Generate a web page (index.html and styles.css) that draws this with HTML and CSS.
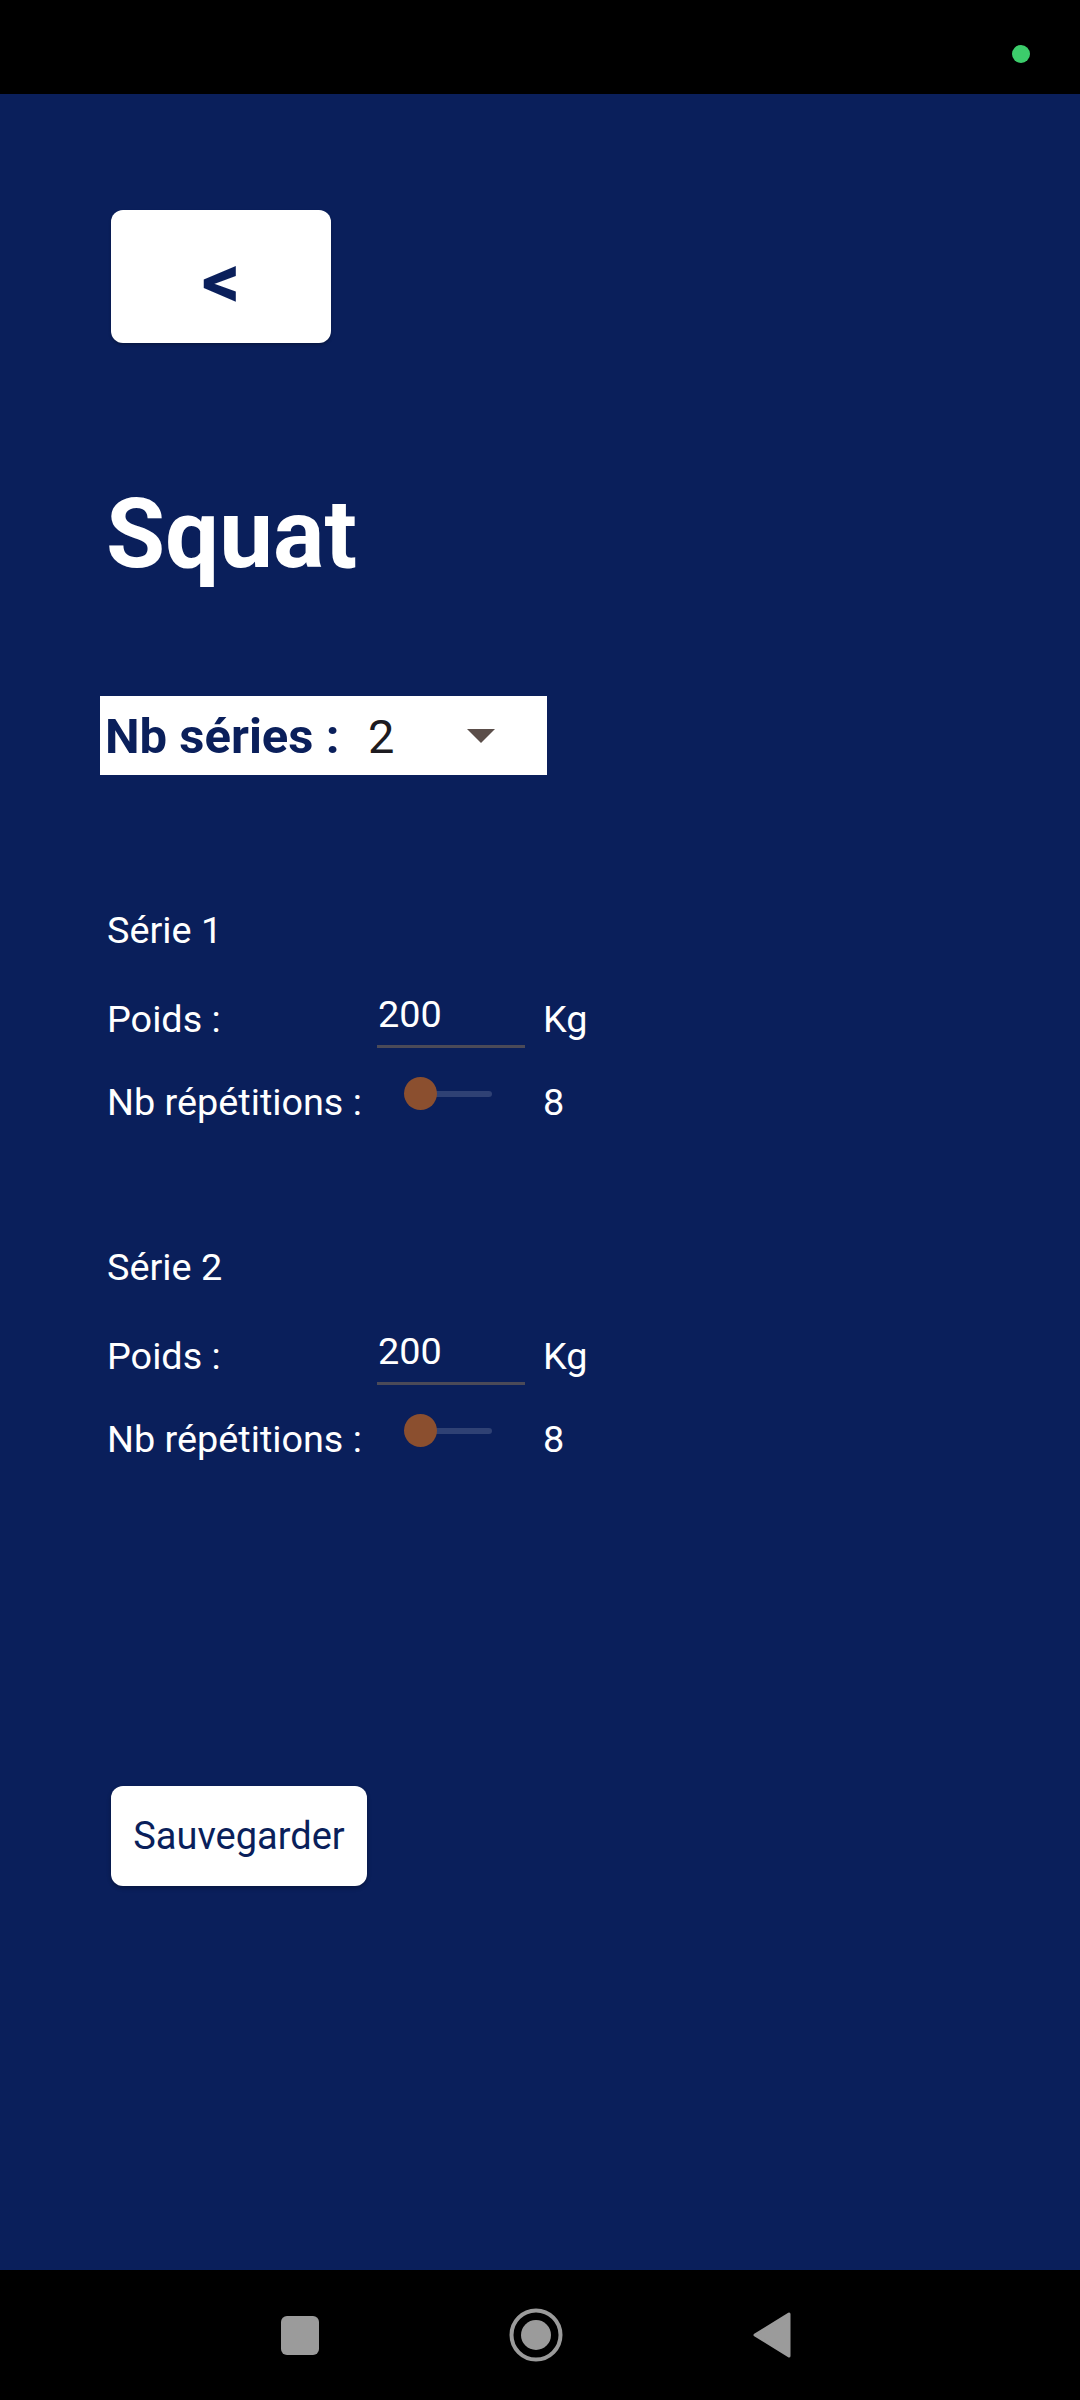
FILE: index.html
```html
<!DOCTYPE html>
<html lang="fr">
<head>
    <meta charset="UTF-8">
    <meta name="viewport" content="width=device-width, initial-scale=1.0">
    <title>Squat</title>
    <link rel="stylesheet" href="styles.css">
</head>
<body>

<div class="status-bar">
    <span class="status-dot"></span>
</div>

<div class="screen">
    <!-- Back button -->
    <button class="back-btn" type="button">&lt;</button>

    <h1 class="title">Squat</h1>

    <!-- Number of series selector -->
    <div class="spinner">
        <span class="spinner-label">Nb séries :</span>
        <span class="spinner-value">2</span>
        <svg class="spinner-arrow" width="28" height="14" viewBox="0 0 28 14">
            <polygon points="0,0 28,0 14,14" fill="#5b4e4a"/>
        </svg>
    </div>

    <div class="serie">
        <div class="serie-title">Série 1</div>
        <div class="row">
            <span class="row-label">Poids :</span>
            <input class="weight-input" type="text" value="200">
            <span class="row-unit">Kg</span>
        </div>
        <div class="row">
            <span class="row-label">Nb répétitions :</span>
            <div class="slider">
                <div class="slider-track"><span class="slider-thumb"></span></div>
            </div>
            <span class="row-unit">8</span>
        </div>
    </div>

    <div class="serie">
        <div class="serie-title">Série 2</div>
        <div class="row">
            <span class="row-label">Poids :</span>
            <input class="weight-input" type="text" value="200">
            <span class="row-unit">Kg</span>
        </div>
        <div class="row">
            <span class="row-label">Nb répétitions :</span>
            <div class="slider">
                <div class="slider-track"><span class="slider-thumb"></span></div>
            </div>
            <span class="row-unit">8</span>
        </div>
    </div>

    <button class="save-btn" type="button">Sauvegarder</button>
</div>

<div class="nav-bar">
    <div class="nav-item">
        <span class="nav-square"></span>
    </div>
    <div class="nav-item">
        <svg width="54" height="54" viewBox="0 0 54 54">
            <circle cx="27" cy="27" r="24.5" fill="none" stroke="#9b9b9b" stroke-width="4"/>
            <circle cx="27" cy="27" r="15" fill="#9b9b9b"/>
        </svg>
    </div>
    <div class="nav-item">
        <svg width="40" height="48" viewBox="0 0 40 48">
            <path d="M37 3 L37 45 L3 24 Z" fill="#9b9b9b" stroke="#9b9b9b" stroke-width="3" stroke-linejoin="round"/>
        </svg>
    </div>
</div>

</body>
</html>
```

FILE: styles.css
```css
body {
    font-family: Roboto, "Noto Sans", sans-serif;
    margin: 0;
    padding: 0;
    width: 1080px;
    height: 2400px;
    background-color: #000;
    overflow: hidden;
}

.status-bar {
    height: 94px;
    background-color: #000;
    display: flex;
    justify-content: flex-end;
    padding-right: 50px;
    box-sizing: border-box;
}

.status-dot {
    width: 18px;
    height: 18px;
    margin-top: 45px;
    border-radius: 50%;
    background-color: #3ccd6b;
}

.screen {
    height: 2176px;
    box-sizing: border-box;
    background-color: #0a1f5b;
    padding: 116px 0 0 100px;
    display: flex;
    flex-direction: column;
    align-items: flex-start;
}

.back-btn {
    width: 220px;
    height: 133px;
    margin-left: 11px;
    border: none;
    border-radius: 12px;
    background-color: #fff;
    color: #0a1f5b;
    font-family: Roboto, sans-serif;
    font-weight: bold;
    font-size: 76px;
    line-height: 1;
    padding: 8px 0 0 0;
    box-shadow: 0 2px 3px rgba(0, 0, 0, 0.25);
}

.title {
    margin: 133px 0 0 6px;
    color: #fff;
    font-size: 96px;
    font-weight: bold;
    line-height: 116px;
    height: 116px;
}

.spinner {
    margin-top: 104px;
    width: 447px;
    height: 79px;
    box-sizing: border-box;
    padding: 3px 52px 0 5px;
    background-color: #fff;
    display: flex;
    align-items: center;
    font-size: 49px;
    line-height: 76px;
}

.spinner-label {
    width: 250px;
    color: #0a1f5b;
    font-weight: bold;
}

.spinner-value {
    padding-left: 13px;
    color: #1d1b20;
    font-size: 47px;
}

.spinner-arrow {
    margin-left: auto;
    margin-top: -3px;
}

.serie {
    margin-top: 133px;
    margin-left: 7px;
    color: #fff;
    font-size: 37.8px;
}

.serie + .serie {
    margin-top: 101px;
}

.serie-title {
    line-height: 45px;
    height: 45px;
    margin-bottom: 25px;
}

.row {
    display: flex;
    align-items: center;
    height: 83px;
    line-height: 45px;
}

.row-label {
    width: 270px;
}

.weight-input {
    width: 147px;
    height: 45px;
    box-sizing: content-box;
    padding: 0 0 8px 1px;
    margin: 0;
    border: none;
    border-bottom: 3px solid #4b4a58;
    background: transparent;
    color: #fff;
    font-family: Roboto, sans-serif;
    font-size: 37.8px;
    line-height: 45px;
    outline: none;
}

.row-unit {
    margin-left: 18px;
}

.slider {
    width: 148px;
    height: 33px;
    margin-bottom: 18px;
    display: flex;
    align-items: center;
}

.slider-track {
    position: relative;
    width: 71px;
    height: 6px;
    margin-left: 44px;
    border-radius: 3px;
    background-color: #2f4174;
}

.slider-thumb {
    position: absolute;
    left: -17px;
    top: -13.5px;
    width: 33px;
    height: 33px;
    border-radius: 50%;
    background-color: #8b4f2f;
}

.save-btn {
    margin-top: 305px;
    margin-left: 11px;
    width: 256px;
    height: 100px;
    border: none;
    border-radius: 12px;
    background-color: #fff;
    color: #0a1f5b;
    font-family: Roboto, sans-serif;
    font-size: 38px;
    padding: 0;
    box-shadow: 0 2px 4px rgba(0, 0, 0, 0.3);
}

.nav-bar {
    height: 130px;
    background-color: #000;
    display: flex;
    align-items: center;
    padding-left: 182px;
}

.nav-item {
    width: 236px;
    display: flex;
    justify-content: center;
    align-items: center;
}

.nav-square {
    width: 38px;
    height: 39px;
    border-radius: 6px;
    background-color: #9b9b9b;
}
```
